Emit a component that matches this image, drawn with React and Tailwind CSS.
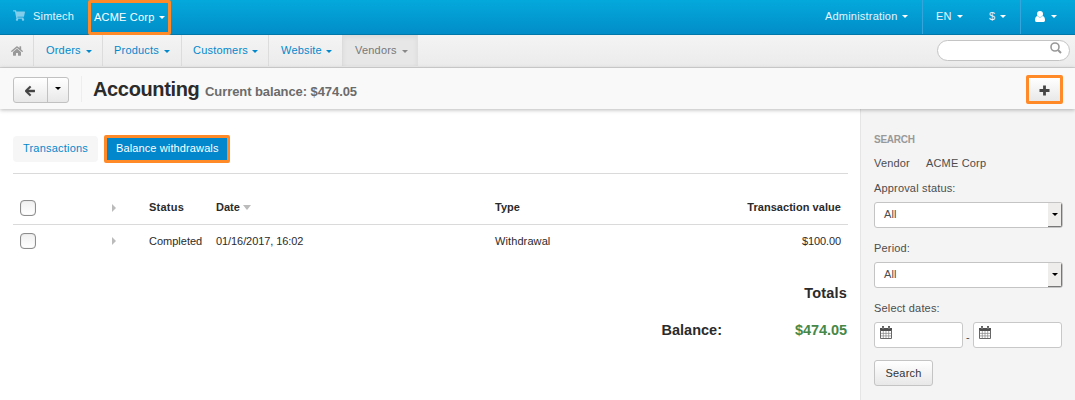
import React from "react";
import { FaShoppingCart, FaHome, FaArrowLeft } from "react-icons/fa";

const Caret = ({ className = "" }) => (
  <span className={`block h-0 w-0 shrink-0 border-x-3 border-t-3 border-x-transparent ${className}`} />
);

const NavItem = ({ label, className, active }) => (
  <div
    className={`flex h-[31px] items-center justify-between border-r pb-px ${
      active
        ? "border-[#e0e0e0] bg-[#e7e7e7] text-[#777] shadow-[inset_0_2px_5px_rgba(0,0,0,0.06)]"
        : "border-[#dcdcdc] text-[#0388cc]"
    } ${className}`}
  >
    <span>{label}</span>
    <Caret className={active ? "mt-[3px] border-t-[#888]" : "mt-[3px] border-t-[#0388cc]"} />
  </div>
);

const Checkbox = () => (
  <span className="block h-4 w-4 rounded-[4px] border border-[#8d8d8d] bg-gradient-to-b from-[#f0f0f0] to-white shadow-[inset_0_0_1px_#aaa]" />
);

const Right = () => <span className="block h-0 w-0 border-y-4 border-l-4 border-y-transparent border-l-[#bbb]" />;

const Select = () => (
  <div className="flex h-[26px] w-[189px] overflow-hidden rounded-[3px] border border-[#c4c4c4] bg-white">
    <span className="flex-1 pl-[9px] leading-[23px]">All</span>
    <span className="flex w-[14px] items-center justify-center border-b border-r border-[#777] bg-[#eeedeb]">
      <Caret className="border-t-black" />
    </span>
  </div>
);

const User = () => (
  <svg className="ml-[14px] h-[11px] w-[10px]" viewBox="0 0 10 11" fill="white">
    <circle cx="5" cy="3" r="3" />
    <path d="M2.3 5.1C.6 5.5 0 7.2 0 9.2 0 10.3.7 11 1.7 11h6.6c1 0 1.7-.7 1.7-1.8 0-2-.6-3.7-2.3-4.1C6 6.9 4 6.9 2.3 5.1z" />
  </svg>
);

const Calendar = () => (
  <svg className="ml-[5px] mt-[3px] block" width="12" height="13" viewBox="0 0 12 13">
    <path fill="#4f4f4f" d="M0 2h2V0h2v2h4V0h2v2h2v3H0z" />
    <path fill="none" stroke="#666" strokeWidth="1" d="M.5 4v8.500h11V4" />
    <path stroke="#858585" strokeWidth=".7" d="M3.300 5v7M6 5v7M8.700 5v7M1 7.400h10M1 9.900h10" />
    <path stroke="#ccc" strokeWidth=".6" d="M3 .5v2.500M9 .5v2.500" />
  </svg>
);

const DateField = () => (
  <div className="h-[26px] w-[89px] rounded-[3px] border border-[#c8c8c8] bg-white">
    <Calendar />
  </div>
);

export default function App() {
  return (
    <div className="flex h-[400px] w-[1075px] flex-col overflow-hidden bg-white font-['Liberation_Sans',Arial,sans-serif] text-[11px] leading-4 text-[#2b2b2b]">
      <header className="flex h-[35px] shrink-0 justify-between border-b border-[#0077a8] bg-gradient-to-b from-[#04a9dc] to-[#028dc8] tracking-[0.2px] text-white">
        <div className="flex h-[35px]">
          <FaShoppingCart className="ml-[13px] mt-[10px] h-[11px] w-3 text-[#83cdeb]" />
          <span className="ml-2 mt-2 w-[55px] text-[#e5f5fc]">Simtech</span>
          <div className="flex h-[35px] w-[83px] items-center justify-between rounded-[2px] border-3 border-[#ff8a27] px-[3px] pb-[2px]">
            <span>ACME Corp</span>
            <Caret className="mt-0.5 border-t-white" />
          </div>
        </div>
        <div className="flex h-[34px] items-center pb-[2px] text-[#e5f5fc]">
          <span className="w-[77px]">Administration</span>
          <Caret className="border-t-white" />
          <span className="ml-[14px] mt-0.5 h-[34px] w-px bg-[#35a5dc]" />
          <span className="ml-[13px] w-[21px]">EN</span>
          <Caret className="border-t-white" />
          <span className="ml-[26px] w-[11px]">$</span>
          <Caret className="border-t-white" />
          <span className="ml-[14px] mt-0.5 h-[34px] w-px bg-[#35a5dc]" />
          <User />
          <Caret className="ml-[6px] mr-[18px] border-t-white" />
        </div>
      </header>

      <nav className="flex h-[33px] shrink-0 justify-between border-b border-[#d5d5d5] bg-gradient-to-b from-[#f4f4f4] to-[#ebebeb] tracking-[0.2px]">
        <div className="flex">
          <div className="flex h-[31px] w-[34px] items-center border-r border-[#dcdcdc] pl-[11px]">
            <FaHome className="h-[12px] w-[12px] text-[#999]" />
          </div>
          <NavItem label="Orders" className="w-[69px] pl-3 pr-[10px]" />
          <NavItem label="Products" className="w-[79px] pl-[11px] pr-[11px]" />
          <NavItem label="Customers" className="w-[87px] pl-[11px] pr-[10px]" />
          <NavItem label="Website" className="w-[74px] pl-3 pr-[10px]" />
          <NavItem label="Vendors" active className="w-[75px] pl-3 pr-[9px]" />
        </div>
        <div className="mr-[5px] mt-[5px] flex h-[21px] w-[133px] justify-end rounded-full border border-[#c4c4c4] bg-white pr-[7px] pt-px">
          <svg className="h-3 w-3" viewBox="0 0 12 12" fill="none" stroke="#999" strokeWidth="1.6">
            <circle cx="5" cy="5" r="4" />
            <path d="M8 8l3 3" strokeWidth="2" />
          </svg>
        </div>
      </nav>

      <div className="z-10 flex h-[41px] shrink-0 items-center justify-between bg-[#f9f9f9] shadow-[0_1px_4px_rgba(0,0,0,0.28)]">
        <div className="flex h-full items-center">
          <div className="ml-[13px] mt-0.5 flex h-[26px] w-[56px] rounded-[3px] border border-[#c1c1c1] bg-gradient-to-b from-white to-[#e8e8e8] text-[#444]">
            <span className="flex w-[34px] items-center justify-center border-r border-[#c1c1c1] pt-[3px] pr-px">
              <FaArrowLeft className="h-3 w-[10px]" stroke="#444" strokeWidth="28" />
            </span>
            <span className="flex flex-1 items-center justify-center pb-0.5">
              <Caret className="border-t-black" />
            </span>
          </div>
          <span className="ml-3 h-[26px] w-px bg-[#eeeeee]" />
          <h1 className="ml-[11px] mt-px w-[112px] whitespace-nowrap text-[20px] font-bold leading-6 tracking-[-0.35px]">Accounting</h1>
          <span className="mt-[6px] text-[13px] font-bold tracking-[-0.08px] text-[#6b6b6b]">Current balance: $474.05</span>
        </div>
        <div className="mr-3 mt-0.5 flex h-[29px] w-[37px] items-center justify-center rounded-[2px] border-3 border-[#ff8a27] bg-gradient-to-b from-white to-[#e8e8e8]">
          <svg className="mt-0.5 h-[11px] w-[11px]" viewBox="0 0 11 11">
            <path d="M5.500 .5v10M.5 5.500h10" stroke="#444" strokeWidth="2.800" />
          </svg>
        </div>
      </div>

      <div className="flex min-h-0 flex-1">
        <main className="w-[860px] shrink-0 pl-[13px] pr-3">
          <div className="flex h-[65px] items-start border-b border-[#dadada] pt-[26px]">
            <span className="mt-px h-[26px] w-[85px] rounded-[4px] bg-[#f6f6f6] pl-[10px] leading-6 tracking-[0.2px] text-[#0388cc]">Transactions</span>
            <span className="ml-[6px] h-[28px] w-[126px] rounded-[2px] border-3 border-[#ff8a27] bg-[#0286cc] pl-[9px] leading-[21px] tracking-[0.12px] text-white">Balance withdrawals</span>
          </div>
          <div className="grid h-[51px] grid-cols-[92px_37px_67px_279px_1fr] items-center border-b border-[#dadada] px-[7px] pt-[17px] font-bold">
            <Checkbox />
            <Right />
            <span className="-mt-px tracking-[0.25px]">Status</span>
            <span className="-mt-px flex items-center gap-[3px]">
              Date <span className="h-0 w-0 border-x-4 border-t-[5px] border-x-transparent border-t-[#bbb]" />
            </span>
            <span className="-mt-px flex justify-between">
              <span>Type</span>
              <span className="tracking-[0.05px]">Transaction value</span>
            </span>
          </div>
          <div className="grid h-[32px] grid-cols-[92px_37px_67px_279px_1fr] items-center px-[7px]">
            <Checkbox />
            <Right />
            <span>Completed</span>
            <span className="tracking-[-0.08px]">01/16/2017, 16:02</span>
            <span className="flex justify-between">
              <span className="tracking-[0.1px]">Withdrawal</span>
              <span className="tracking-[-0.1px]">$100.00</span>
            </span>
          </div>
          <div className="mt-[26px] pr-px text-right text-[14.5px] font-bold leading-5">
            <div className="tracking-[0.2px]">Totals</div>
            <div className="mt-[17px] flex justify-end">
              <span>Balance:</span>
              <span className="w-[125px] tracking-[-0.05px] text-[#468847]">$474.05</span>
            </div>
          </div>
        </main>
        <aside className="flex-1 border-l border-[#e5e5e5] bg-[#f4f4f4] pl-[13px] pt-[23px] tracking-[0.17px] text-[#4c4c4c]">
          <div className="text-[10px] font-bold tracking-[-0.25px] text-[#999]">SEARCH</div>
          <div className="mt-[7px] flex">
            <span className="w-[52px]">Vendor</span>
            <span>ACME Corp</span>
          </div>
          <div className="mt-[9px] mb-[6px]">Approval status:</div>
          <Select />
          <div className="mt-3 mb-[6px]">Period:</div>
          <Select />
          <div className="mt-3 mb-[6px]">Select dates:</div>
          <div className="flex">
            <DateField />
            <span className="w-[10px] pt-[7px] text-center">-</span>
            <DateField />
          </div>
          <button className="mt-3 h-[26px] w-[59px] rounded-[3px] border border-[#c4c4c4] bg-gradient-to-b from-white to-[#e8e8e8] pb-px text-[#333]">Search</button>
        </aside>
      </div>
    </div>
  );
}
